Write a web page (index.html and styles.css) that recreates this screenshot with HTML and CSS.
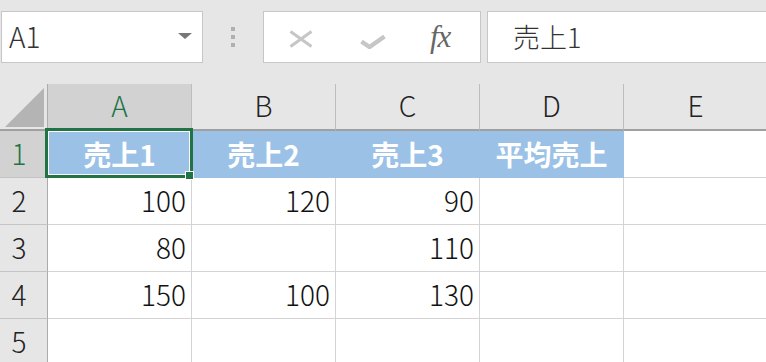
FILE: index.html
```html
<!DOCTYPE html>
<html lang="ja">
<head>
  <meta charset="UTF-8" />
  <title>Sheet1</title>
  <link rel="stylesheet" href="styles.css">
</head>
<body>
  <div class="toolbar">
    <div class="namebox">
      <span>A1</span>
      <svg class="caret" width="14" height="6" viewBox="0 0 14 6"><path d="M0 0H14L7 6Z" fill="#777"/></svg>
    </div>
    <div class="grip"><i></i><i></i><i></i></div>
    <div class="fx-buttons">
      <svg class="cancel" width="24" height="18" viewBox="0 0 24 18"><path d="M1.5 1.5L22.5 16.5M22.5 1.5L1.5 16.5" stroke="#c6c6c6" stroke-width="3" fill="none"/></svg>
      <svg class="enter" width="26" height="14" viewBox="0 0 26 14"><path d="M1.5 6.5L9.5 12L24.5 1.5" stroke="#c6c6c6" stroke-width="4.4" fill="none"/></svg>
      <span class="fx">fx</span>
    </div>
    <div class="formula">売上1</div>
  </div>

  <div class="sheet">
    <div class="corner"><svg width="39" height="39" viewBox="0 0 39 39"><path d="M39 0V39H0Z" fill="#b4b4b4"/></svg></div>
    <div class="col-head active">A</div>
    <div class="col-head">B</div>
    <div class="col-head">C</div>
    <div class="col-head">D</div>
    <div class="col-head">E</div>

    <div class="row-head active">1</div>
    <div class="cell hd current">売上1<span class="sel"><b class="handle"></b></span></div>
    <div class="cell hd">売上2</div>
    <div class="cell hd">売上3</div>
    <div class="cell hd">平均売上</div>
    <div class="cell"></div>

    <div class="row-head">2</div>
    <div class="cell num">100</div>
    <div class="cell num">120</div>
    <div class="cell num">90</div>
    <div class="cell"></div>
    <div class="cell"></div>

    <div class="row-head">3</div>
    <div class="cell num">80</div>
    <div class="cell"></div>
    <div class="cell num">110</div>
    <div class="cell"></div>
    <div class="cell"></div>

    <div class="row-head">4</div>
    <div class="cell num">150</div>
    <div class="cell num">100</div>
    <div class="cell num">130</div>
    <div class="cell"></div>
    <div class="cell"></div>

    <div class="row-head">5</div>
    <div class="cell"></div>
    <div class="cell"></div>
    <div class="cell"></div>
    <div class="cell"></div>
    <div class="cell"></div>
  </div>
</body>
</html>
```

FILE: styles.css
```css
* { box-sizing: border-box; }

body {
  margin: 0;
  width: 766px;
  height: 362px;
  overflow: hidden;
  background: #e6e6e6;
  font-family: "Noto Sans CJK JP", "Noto Sans", sans-serif;
  font-weight: 300;
  color: #222;
}

/* formula bar */
.toolbar {
  display: flex;
  align-items: flex-start;
  height: 84px;
  padding-top: 11px;
}

.namebox {
  display: flex;
  align-items: center;
  justify-content: space-between;
  width: 202px;
  height: 52px;
  margin-left: 1px;
  padding: 0 10px 0 7px;
  background: #fff;
  border: 1px solid #c6c6c6;
  font-size: 28px;
  color: #333;
}

.namebox span { margin-top: -2px; }
.caret { margin-top: -3px; }

.grip {
  display: flex;
  flex-direction: column;
  gap: 4px;
  margin: 16px 28px 0;
}

.grip i {
  display: block;
  width: 4px;
  height: 4px;
  background: #b0b0b0;
}

.fx-buttons {
  width: 218px;
  height: 52px;
  background: #fff;
  border: 1px solid #c6c6c6;
  display: flex;
  align-items: center;
}

.cancel { margin: 3px 0 0 25px; }
.enter { margin: 10px 0 0 47px; }

.fx {
  margin: 0 0 0 44px;
  font-family: "Liberation Serif", "DejaVu Serif", serif;
  font-style: italic;
  font-weight: 400;
  font-size: 31px;
  color: #666;
  letter-spacing: -1px;
}

.formula {
  flex: 1;
  height: 52px;
  margin-left: 6px;
  margin-right: -2px;
  padding: 5px 0 0 25px;
  background: #fff;
  border: 1px solid #c6c6c6;
  font-size: 27px;
  color: #333;
}

/* grid */
.sheet {
  display: grid;
  grid-template-columns: 48px repeat(5, 144px);
  grid-template-rows: repeat(6, 47px);
}

.corner {
  display: flex;
  align-items: flex-end;
  justify-content: flex-end;
  padding: 0 3px 2px 0;
  background: #e6e6e6;
  border-right: 1px solid #ababab;
  border-bottom: 2px solid #a0a0a0;
}

.col-head {
  display: flex;
  align-items: center;
  justify-content: center;
  padding-bottom: 3px;
  background: #e6e6e6;
  border-right: 1px solid #bdbdbd;
  border-bottom: 2px solid #a0a0a0;
  font-size: 28px;
}

.row-head {
  display: flex;
  align-items: center;
  justify-content: center;
  padding: 0 9px 3px 0;
  background: #e6e6e6;
  border-right: 1px solid #ababab;
  border-bottom: 1px solid #c4c4c4;
  font-size: 28px;
}

.col-head.active,
.row-head.active {
  background: #d2d2d2;
  color: #217346;
}

.cell {
  display: flex;
  align-items: center;
  padding: 0 5px 3px;
  background: #fff;
  border-right: 1px solid #d4d4d4;
  border-bottom: 1px solid #d4d4d4;
  font-size: 28px;
  color: #111;
}

.num { justify-content: flex-end; }

.hd {
  justify-content: center;
  padding-bottom: 1px;
  background: #9bc2e6;
  border-color: #9bc2e6;
  color: #fff;
  font-weight: 700;
}

/* active cell */
.current {
  position: relative;
  z-index: 1;
}

.sel {
  position: absolute;
  top: -3px;
  left: -3px;
  right: -2px;
  bottom: -1px;
  border: 3px solid #217346;
  box-shadow: inset 0 0 0 1px #fff;
}

.handle {
  position: absolute;
  right: -4px;
  bottom: -5px;
  width: 9px;
  height: 9px;
  background: #217346;
  border: 1px solid #fff;
}
```
